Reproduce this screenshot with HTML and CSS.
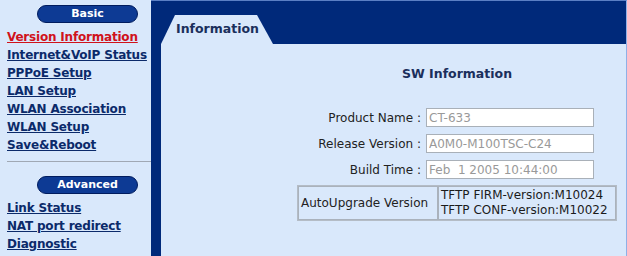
FILE: index.html
```html
<!DOCTYPE html>
<html lang="en">
<head>
    <meta charset="UTF-8">
    <title>Information</title>
    <link rel="stylesheet" href="styles.css">
</head>
<body>
    <div class="page">
        <div class="menu">
            <div class="pill">Basic</div>
            <ul class="links">
                <li><a href="#" class="current">Version Information</a></li>
                <li><a href="#">Internet&amp;VoIP Status</a></li>
                <li><a href="#">PPPoE Setup</a></li>
                <li><a href="#">LAN Setup</a></li>
                <li><a href="#">WLAN Association</a></li>
                <li><a href="#">WLAN Setup</a></li>
                <li><a href="#">Save&amp;Reboot</a></li>
            </ul>
            <div class="sep"></div>
            <div class="pill">Advanced</div>
            <ul class="links">
                <li><a href="#">Link Status</a></li>
                <li><a href="#">NAT port redirect</a></li>
                <li><a href="#">Diagnostic</a></li>
            </ul>
        </div>
        <div class="main">
            <div class="head">
                <div class="tab">Information</div>
            </div>
            <div class="panel">
                <div class="box">
                    <h3>SW Information</h3>
                    <div class="form">
                        <label>Product Name :</label>
                        <input type="text" value="CT-633" readonly>
                        <label>Release Version :</label>
                        <input type="text" value="A0M0-M100TSC-C24" readonly>
                        <label>Build Time :</label>
                        <input type="text" value="Feb  1 2005 10:44:00" readonly>
                    </div>
                    <table class="upgrade">
                        <tr>
                            <td class="name">AutoUpgrade Version</td>
                            <td class="vals">TFTP FIRM-version:M10024<br>TFTP CONF-version:M10022</td>
                        </tr>
                    </table>
                </div>
            </div>
        </div>
    </div>
</body>
</html>
```

FILE: styles.css
```css
/* pagina de informacion */
body {
    margin: 0;
    font-family: "DejaVu Sans", Verdana, sans-serif;
    background-color: #d9e8fb;
}
.page {
    display: flex;
    height: 256px;
}
.menu {
    width: 151px;
    background-color: #d9e8fb;
}
.pill {
    width: 99px;
    height: 16px;
    margin: 5px 0 0 37px;
    background-color: #0d3a94;
    border: 1px solid #001c5e;
    border-radius: 9px;
    color: white;
    font-size: 11px;
    font-weight: bold;
    line-height: 16px;
    text-align: center;
}
.links {
    list-style: none;
    margin: 5px 0 0 0;
    padding: 0 0 0 7px;
}
.links li {
    line-height: 18px;
    font-size: 12px;
    font-weight: bold;
    letter-spacing: -0.2px;
    white-space: nowrap;
}
.links a {
    color: #0b2a6a;
}
.links a.current {
    color: #d0121b;
}
.sep {
    height: 1px;
    margin: 7px 0 14px 7px;
    background-color: #a0a8b4;
}
.main {
    flex: 1;
    display: flex;
    flex-direction: column;
    background-color: #00297a;
    border-top: 1px solid #5b7fc4;
    border-right: 1px solid #8fb0e6;
    padding-left: 10px;
}
.head {
    height: 43px;
    display: flex;
    align-items: flex-end;
}
.tab {
    width: 112px;
    height: 29px;
    box-sizing: border-box;
    padding: 6px 0 0 15px;
    background-color: #d9e8fb;
    clip-path: polygon(14px 0, 96px 0, 112px 100%, 0 100%);
    color: #1b2f5c;
    font-size: 12.5px;
    font-weight: bold;
}
.panel {
    flex: 1;
    background-color: #d9e8fb;
}
.box {
    width: 320px;
    margin-left: 136px;
}
h3 {
    margin: 22px 0 0 0;
    font-size: 12.5px;
    line-height: 16px;
    color: #1b2f5c;
    text-align: center;
}
.form {
    display: grid;
    grid-template-columns: 124px 168px;
    column-gap: 5px;
    row-gap: 7px;
    margin-top: 26px;
    align-items: center;
}
.form label {
    text-align: right;
    font-size: 12px;
    color: #222;
}
.form input {
    height: 19px;
    box-sizing: border-box;
    margin: 0;
    padding: 0 2px;
    border: 1px solid #a9b0b8;
    background-color: white;
    color: #999;
    font-family: "DejaVu Sans", Verdana, sans-serif;
    font-size: 12px;
    white-space: pre;
}
.upgrade {
    width: 320px;
    margin-top: 6px;
    border-collapse: separate;
    border-spacing: 0;
    border: 1px solid #b4bcc6;
    font-size: 12px;
    color: #222;
}
.upgrade td {
    border: 1px solid #aab2bc;
    padding: 1px 2px;
    line-height: 15px;
}
.upgrade .name {
    width: 134px;
    white-space: nowrap;
}
.upgrade .vals {
    white-space: nowrap;
    color: #1b1b1b;
}
```
